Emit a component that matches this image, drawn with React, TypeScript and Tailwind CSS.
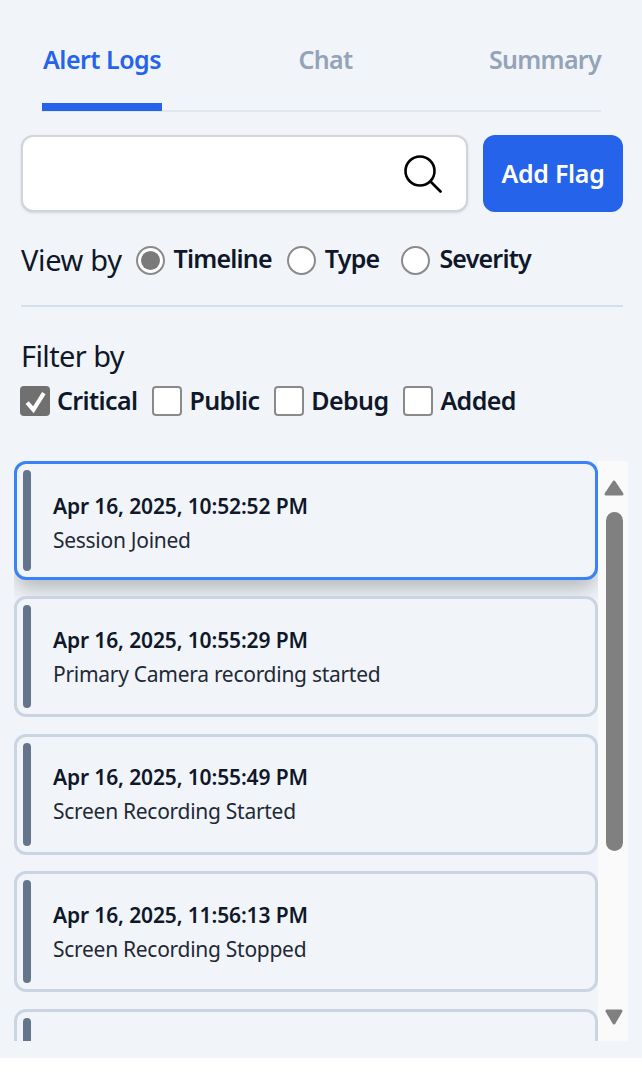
const font = {fontFamily: '"Noto Sans", sans-serif'}

const logs = [
  {time: 'Apr 16, 2025, 10:52:52 PM', label: 'Session Joined', active: true},
  {time: 'Apr 16, 2025, 10:55:29 PM', label: 'Primary Camera recording started'},
  {time: 'Apr 16, 2025, 10:55:49 PM', label: 'Screen Recording Started'},
  {time: 'Apr 16, 2025, 11:56:13 PM', label: 'Screen Recording Stopped'},
]

function Radio({label, checked = false}: {label: string; checked?: boolean}) {
  return (
    <label className="flex items-center gap-[9px]">
      <span className="flex h-[29px] w-[29px] items-center justify-center rounded-full border-2 border-[#8a8a8a] bg-white">
        {checked && <span className="h-[19px] w-[19px] rounded-full bg-[#7a7a7a]" />}
      </span>
      <span className="pb-[2px] text-[25px] font-semibold tracking-[-0.8px] text-[#0f172a]">{label}</span>
    </label>
  )
}

function Check({label, checked = false}: {label: string; checked?: boolean}) {
  return (
    <label className="flex items-center gap-[7px]">
      {checked ? (
        <span className="flex h-[30px] w-[30px] items-center justify-center rounded-[4px] bg-[#707070]">
          <svg viewBox="0 0 24 24" className="h-[25px] w-[25px]" fill="none" stroke="white" strokeWidth="4">
            <path d="M4 13l6 7L20 4" />
          </svg>
        </span>
      ) : (
        <span className="h-[30px] w-[30px] rounded-[4px] border-2 border-[#8a8a8a] bg-white" />
      )}
      <span className="text-[25px] font-semibold tracking-[-0.62px] text-[#0f172a]">{label}</span>
    </label>
  )
}

function LogCard({time, label, active}: {time?: string; label?: string; active?: boolean}) {
  return (
    <div
      className={`flex shrink-0 items-stretch gap-[22px] rounded-[12px] border-[3px] bg-[#f1f5f9] py-[6px] pl-[6px] ${
        active
          ? 'mb-[-0.5px] h-[119px] border-[#3b82f6] shadow-[0_12px_20px_-3px_rgba(0,0,0,0.25)]'
          : 'h-[121px] border-[#cbd5e1]'
      }`}
    >
      <div className="w-[8px] rounded-full bg-[#64748b]" />
      {time && (
        <div className={`flex flex-col justify-center ${active ? 'pt-[6px]' : 'pt-[2px]'}`}>
          <div className="text-[21px] leading-[33px] font-semibold tracking-[-0.13px] text-[#0f172a]">{time}</div>
          <div className="text-[21px] leading-[35px] tracking-[-0.28px] text-[#1f2937]">{label}</div>
        </div>
      )}
    </div>
  )
}

export default function App() {
  return (
    <div className="h-[1058px] bg-[#f1f5f9] pt-[36px]" style={font}>
      {/* tabs */}
      <div className="mx-[41px] flex h-[76px] justify-between border-b-2 border-[#e2e8f0] pt-[5px] text-[25px] font-semibold tracking-[-0.7px] text-[#94a3b8]">
        <div className="mt-[-5px] ml-[1px] h-[75px] w-[120px] border-b-[8px] border-[#2563eb] pt-[5px] pl-[1px] tracking-[-0.5px] text-[#2563eb]">
          Alert Logs
        </div>
        <div>Chat</div>
        <div>Summary</div>
      </div>

      <div className="mt-[23px] flex gap-[15px] pr-[19px] pl-[21px]">
        <div className="flex h-[77px] flex-1 items-center justify-end rounded-[12px] border-2 border-[#d1d5db] bg-white pr-[24px] shadow-sm">
          <svg viewBox="0 0 38 38" className="h-[38px] w-[38px]" fill="none" stroke="black" strokeWidth="2.6" strokeLinecap="round">
            <circle cx="16" cy="16" r="14.5" />
            <path d="M26.5 26.5L36.5 36.5" />
          </svg>
        </div>
        <button className="h-[77px] w-[140px] rounded-[12px] bg-[#2563eb] text-[25px] font-semibold tracking-[-0.3px] text-white">
          Add Flag
        </button>
      </div>

      <div className="mt-[30px] flex h-[36px] items-center pl-[21px]">
        <span className="mr-[14px] text-[29px] tracking-[-0.35px] text-[#0f172a]">View by</span>
        <div className="flex gap-[15px]">
          <Radio label="Timeline" checked />
          <Radio label="Type" />
          <div className="ml-[7px]">
            <Radio label="Severity" />
          </div>
        </div>
      </div>

      <div className="mt-[27px] mr-[19px] ml-[21px] h-[2px] bg-[#cbd5e1] opacity-70" />

      <div className="mt-[28px] pl-[21px] text-[29px] leading-[42px] tracking-[-0.6px] text-[#0f172a]">Filter by</div>
      <div className="mt-[6px] flex h-[36px] items-center gap-[15px] pl-[20px]">
        <Check label="Critical" checked />
        <Check label="Public" />
        <Check label="Debug" />
        <Check label="Added" />
      </div>

      <div className="mt-[42px] flex h-[580px] pl-[14px]">
        <div className="flex w-[584px] flex-col gap-[16.5px] overflow-hidden">
          {logs.map((log) => (
            <LogCard key={log.time} {...log} />
          ))}
          <LogCard />
        </div>
        <div className="flex w-[30px] flex-col items-center bg-[#fafafa] pl-[2px]">
          <svg viewBox="0 0 20 16" className="mt-[19px] h-[16px] w-[20px]" fill="#808080">
            <path d="M10 2L18 14H2z" stroke="#808080" strokeWidth="3" strokeLinejoin="round" />
          </svg>
          <div className="mt-[16px] h-[339px] w-[17px] rounded-full bg-[#808080]" />
          <svg viewBox="0 0 18 16" className="mt-[158px] h-[16px] w-[18px]" fill="#808080">
            <path d="M2 2H16L9 14z" stroke="#808080" strokeWidth="3" strokeLinejoin="round" />
          </svg>
        </div>
      </div>
    </div>
  )
}
